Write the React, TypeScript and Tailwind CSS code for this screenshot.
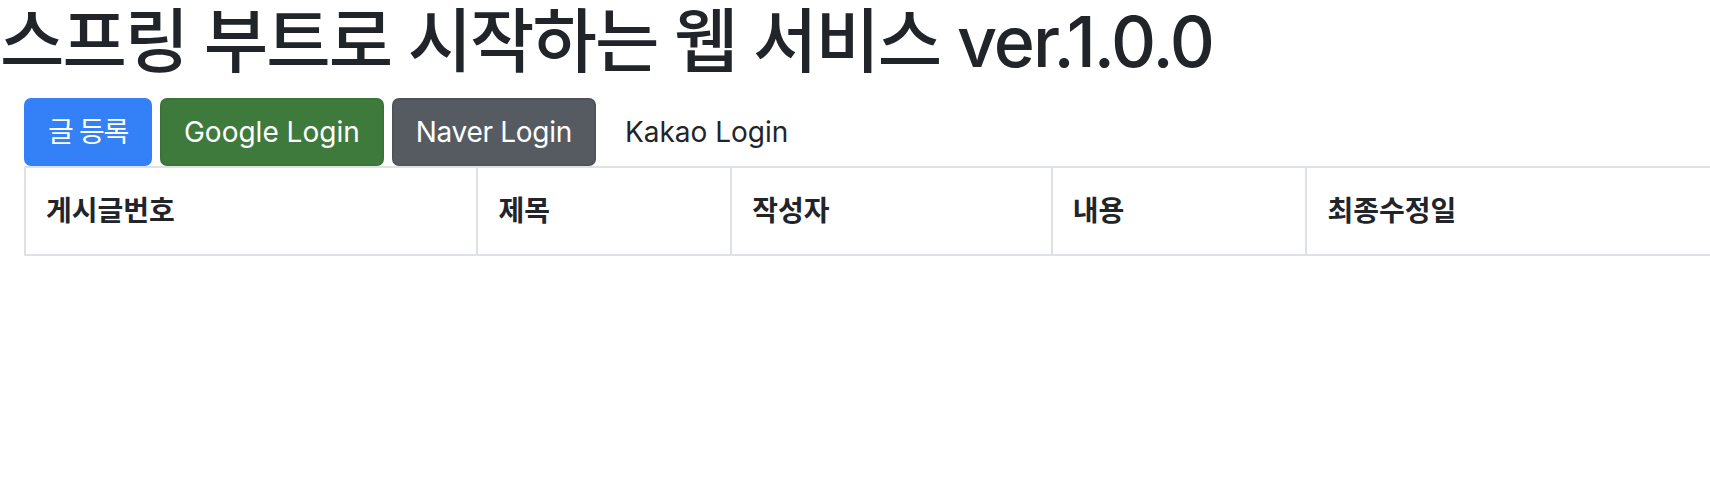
const font = { fontFamily: 'Inter, "Noto Sans CJK KR", sans-serif' };

const columns = [
  { label: "게시글번호", width: "w-[453px]" },
  { label: "제목", width: "w-[254px]" },
  { label: "작성자", width: "w-[321px]" },
  { label: "내용", width: "w-[255px]" },
  { label: "최종수정일", width: "w-[420px]" },
];

export default function App() {
  return (
    <div className="w-[1710px] h-[490px] overflow-hidden bg-white text-[#212529]" style={font}>
      {/* Title */}
      <h1 className="mb-[14px] text-[70px] leading-[84px] font-medium whitespace-nowrap tracking-[-2px]">
        스프링 부트로 시작하는 웹 서비스 ver.1.0.0
      </h1>

      <div className="pl-[24px]">
        {/* Buttons */}
        <div className="flex gap-[8px]">
          <button className="h-[68px] px-[22px] rounded-[7px] border-2 border-[#3380f7] bg-[#3380f7] text-white text-[28px] leading-[42px] tracking-[-1.3px]">
            글 등록
          </button>
          <button className="h-[68px] px-[22px] rounded-[7px] border-2 border-[#3a7538] bg-[#3e7a3c] text-white text-[28px] leading-[42px]">
            Google Login
          </button>
          <button className="h-[68px] px-[22px] rounded-[7px] border-2 border-[#4f545b] bg-[#565b62] text-white text-[28px] leading-[42px] tracking-[-0.3px]">
            Naver Login
          </button>
          <button className="h-[68px] pl-[19px] pr-[22px] rounded-[7px] border-2 border-transparent text-[#212529] text-[28px] leading-[42px]">
            Kakao Login
          </button>
        </div>

        {/* Posts table */}
        <table className="w-[1703px] border-collapse">
          <thead>
            <tr>
              {columns.map((c) => (
                <th
                  key={c.label}
                  className={`${c.width} border-2 border-[#dee2e6] pl-[20px] pr-[21px] py-[22px] text-left text-[28px] leading-[42px] font-bold`}
                >
                  {c.label}
                </th>
              ))}
            </tr>
          </thead>
          <tbody />
        </table>
      </div>
    </div>
  );
}
